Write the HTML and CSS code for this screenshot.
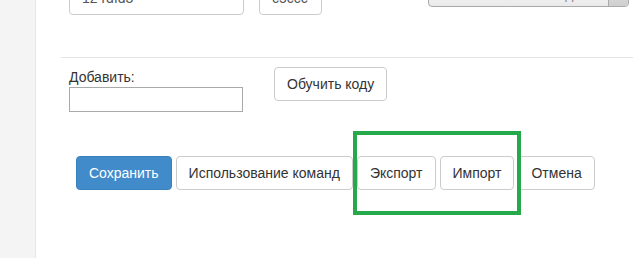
FILE: index.html
```html
<!DOCTYPE html>
<html lang="ru">
<head>
  <meta charset="UTF-8" />
  <meta name="viewport" content="width=device-width, initial-scale=1.0"/>
  <title>Команды</title>
  <link rel="stylesheet" href="styles.css">
</head>
<body>

  <div class="sidebar"></div>

  <div class="main">
    <div class="top-row">
      <input class="field field-wide" type="text" value="12 rdfd3" />
      <input class="field field-short" type="text" value="c5ccc" />
      <div class="select">
        <span class="select-text">Записанная команда</span>
        <span class="select-arrow"></span>
      </div>
    </div>

    <hr class="divider" />

    <div class="add-row">
      <div class="add-col">
        <label class="add-label" for="addInput">Добавить:</label>
        <input class="add-input" id="addInput" type="text" />
      </div>
      <button class="btn">Обучить коду</button>
    </div>

    <div class="actions">
      <button class="btn btn-primary">Сохранить</button>
      <button class="btn">Использование команд</button>
      <button class="btn">Экспорт</button>
      <button class="btn">Импорт</button>
      <button class="btn">Отмена</button>
    </div>
  </div>

  <div class="highlight"></div>

</body>
</html>
```

FILE: styles.css
```css
body {
  margin: 0;
  display: flex;
  min-height: 258px;
  font-family: "Liberation Sans", Arial, sans-serif;
  font-size: 14px;
  color: #333;
  background-color: #fff;
  overflow: hidden;
}
.sidebar {
  width: 35px;
  flex-shrink: 0;
  background-color: #f4f4f4;
  border-right: 1px solid #e6e6e6;
}
.main {
  flex: 1;
  padding-left: 25px;
}
.top-row {
  display: flex;
  align-items: flex-start;
  margin-top: -19px;
  margin-left: 8px;
}
.field {
  box-sizing: border-box;
  height: 34px;
  padding: 6px 12px;
  border: 1px solid #ccc;
  border-radius: 4px;
  font-family: inherit;
  font-size: 14px;
  color: #555;
}
.field-wide {
  width: 175px;
}
.field-short {
  width: 63px;
  margin-left: 15px;
}
.select {
  box-sizing: border-box;
  display: flex;
  width: 201px;
  height: 26px;
  margin-left: 106px;
  border: 1px solid #aaa;
  border-radius: 4px;
  background: linear-gradient(#fff, #e9e9e9);
  overflow: hidden;
}
.select-text {
  flex: 1;
  padding: 4px 0 0 16px;
  color: #888;
  font-size: 14px;
}
.select-arrow {
  width: 19px;
  border-left: 1px solid #aaa;
  background: linear-gradient(#e2e2e2, #cfcfcf);
}
.divider {
  border: 0;
  border-top: 1px solid #e3e3e3;
  margin: 42px 0 0 0;
}
.add-row {
  display: flex;
  align-items: flex-start;
  margin-top: 9px;
  margin-left: 8px;
}
.add-col {
  display: flex;
  flex-direction: column;
  width: 174px;
  margin-top: 2px;
  margin-right: 31px;
}
.add-label {
  line-height: 17px;
  margin-bottom: 1px;
}
.add-input {
  box-sizing: border-box;
  height: 25px;
  border: 1px solid #a9a9a9;
  padding: 2px 4px;
}
.btn {
  box-sizing: border-box;
  height: 34px;
  padding: 6px 12px;
  font-family: inherit;
  font-size: 14px;
  line-height: 20px;
  color: #333;
  background-color: #fff;
  border: 1px solid #ccc;
  border-radius: 4px;
}
.btn-primary {
  color: #fff;
  background-color: #428bca;
  border-color: #3a80bd;
}
.actions {
  display: flex;
  gap: 4px;
  margin-top: 44px;
  margin-left: 15px;
}
.highlight {
  position: absolute;
  left: 353px;
  top: 131px;
  width: 160px;
  height: 76px;
  border: 4px solid #25a94b;
}
```
